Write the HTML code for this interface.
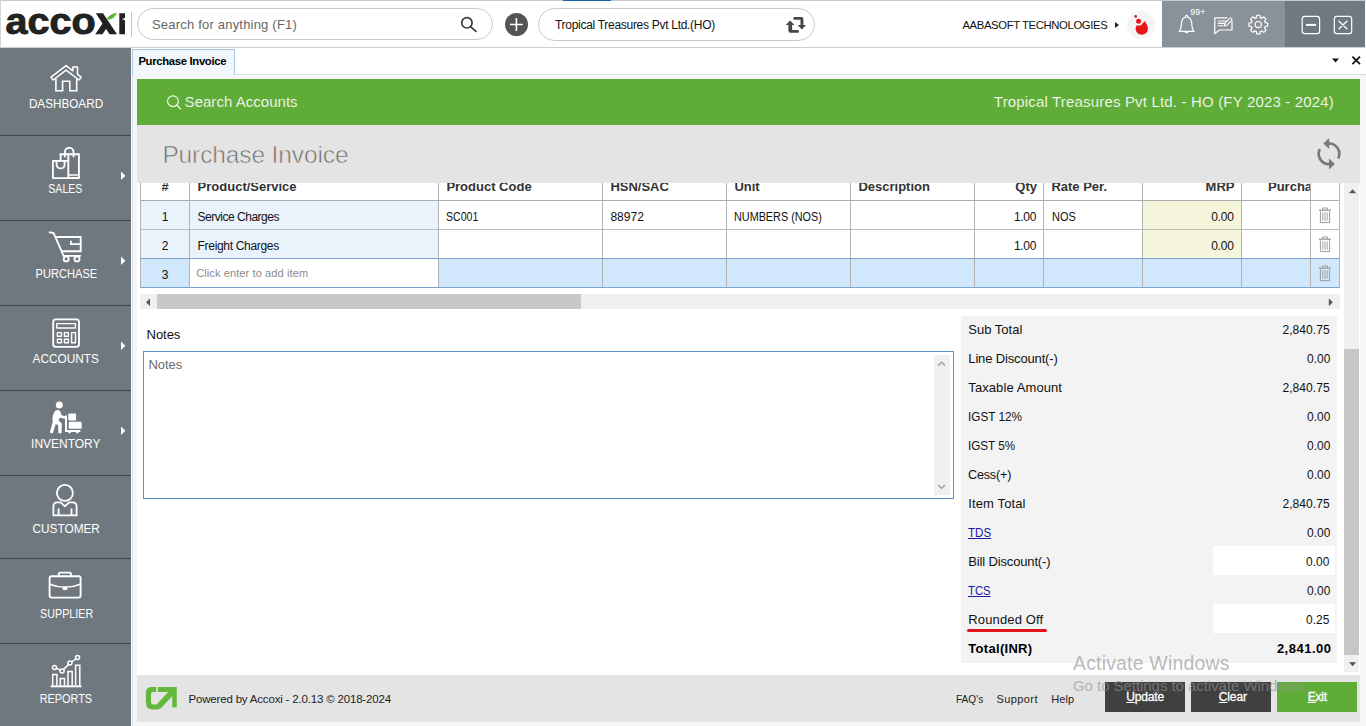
<!DOCTYPE html>
<html>
<head>
<meta charset="utf-8">
<title>Accoxi - Purchase Invoice</title>
<style>
*{box-sizing:border-box;margin:0;padding:0}
html,body{width:1366px;height:726px;overflow:hidden;background:#fff;font-family:"Liberation Sans",sans-serif;color:#111}
.abs{position:absolute}
.t{position:absolute;white-space:pre;line-height:1}
#app{position:relative;width:1366px;height:726px;overflow:hidden;background:#fff}

/* top bar */
#topline{left:0;top:0;width:1366px;height:1px;background:#c9c9c9}
#blueacc{left:563px;top:0;width:48px;height:1px;background:#1f62ad}
#leftline{left:0;top:0;width:1px;height:47px;background:#d5d5d5}
#barline{left:0;top:47px;width:1366px;height:1px;background:#cfcfcf}
#logosep{left:131px;top:12px;width:1px;height:25px;background:#c4c4c4}
.pill{border:1px solid #c9c9c9;border-radius:17px;background:#fff}
#search{left:137px;top:8px;width:356px;height:32px}
#company{left:538px;top:8px;width:277px;height:33px}
#plus{left:505px;top:13px;width:23px;height:23px;border-radius:50%;background:#555}
#ctrl1{left:1162px;top:1px;width:123px;height:46px;background:#8a9299}
#ctrl2{left:1285px;top:1px;width:80px;height:46px;background:#707981}
#avatar{left:1126.8px;top:10.9px;width:28.4px;height:28.4px;border-radius:50%;background:#f4f4f4}

/* sidebar */
#side{left:0;top:48px;width:131px;height:678px;background:#70787f}
.sitem{position:absolute;left:0;width:131px;height:85px;border-bottom:1px solid #4f575e}
.slabel{position:absolute;left:0;width:131px;text-align:center;color:#fff;font-size:12px;letter-spacing:-0.2px;line-height:1;white-space:pre}
.sarrow{position:absolute;left:120px;width:0;height:0;border-left:5px solid #fff;border-top:4px solid transparent;border-bottom:4px solid transparent}

/* main */
#mainborder{left:132px;top:75px;width:1px;height:651px;background:#dfe5ec}
#tab{left:132px;top:49px;width:103px;height:26px;background:#f2f7fc;border:1px solid #a9c4e0;border-bottom:none}
#tabline{left:235px;top:74px;width:1131px;height:1px;background:#dcdcdc}
#green{left:137px;top:79px;width:1223px;height:46px;background:#5fad38}
#title{left:137px;top:125px;width:1223px;height:58px;background:#e4e4e4}

.th{font-size:13px;font-weight:700;color:#333}
.td{font-size:12px;color:#111;letter-spacing:-0.3px}
</style>
</head>
<body>
<div id="app">

<!-- ======= TOP BAR ======= -->
<div class="abs" id="topline"></div>
<div class="abs" id="blueacc"></div>
<div class="abs" id="leftline"></div>
<div class="abs" id="barline"></div>
<svg class="abs" style="left:0;top:0" width="131" height="47" viewBox="0 0 131 47">
<text x="5.6" y="34.1" font-family="Liberation Sans" font-weight="700" font-size="36.4" textLength="90" lengthAdjust="spacingAndGlyphs" fill="#222" stroke="#222" stroke-width="0.9">acco</text>
<path d="M95.8 13.2 H103 L117 34.3 H109.6 Z" fill="#222"/>
<path d="M95.2 34.3 L103.4 22.2 L107 27.6 L102.4 34.3 Z" fill="#222"/>
<path d="M106.6 19.8 C108 15.8 112 13.4 116.7 13.1 C115.2 17.6 111.4 20.2 106.6 19.8 Z" fill="#62b83a"/>
<path d="M119.3 13.2 H125 V17.9 L121.8 19.1 L125 20.3 V34.3 H119.3 Z" fill="#222"/>
</svg>
<div class="abs" id="logosep"></div>
<div class="abs pill" id="search"></div>
<div class="t" style="left:152px;top:18px;font-size:13px;letter-spacing:0.2px;color:#666">Search for anything (F1)</div>
<svg class="abs" style="left:458px;top:14px" width="22" height="22" viewBox="0 0 22 22" fill="none" stroke="#3a3a3a" stroke-width="1.7"><circle cx="8.9" cy="8.8" r="5.2"/><path d="M12.8 12.8 L18 17.4" stroke-linecap="round"/></svg>
<div class="abs" id="plus"></div>
<svg class="abs" style="left:505px;top:13px" width="23" height="23" viewBox="0 0 23 23" fill="none" stroke="#fff" stroke-width="1.6"><path d="M11.4 5 V18 M4.9 11.5 H17.9"/></svg>
<div class="abs pill" id="company"></div>
<div class="t" style="left:555px;top:19px;font-size:12px;letter-spacing:-0.29px;color:#111">Tropical Treasures Pvt Ltd.(HO)</div>
<svg class="abs" style="left:784px;top:14px" width="24" height="22" viewBox="784 14 24 22" fill="#474747">
<path d="M790.1 20.6 L794.4 25 H792.1 V29.9 H798 Q798.9 29.9 798.9 30.9 V31.7 Q798.9 32.7 798 32.7 H790.4 Q788.4 32.7 788.4 30.7 V25 H785.8 Z"/>
<path d="M801.9 29.5 L797.7 25.1 H800.5 V19.8 H794.4 Q793.4 19.8 793.4 18.8 V18 Q793.4 17 794.4 17 H801.4 Q803.4 17 803.4 19 V25.1 H806 Z"/>
</svg>
<div class="t" style="left:962.4px;top:19.8px;font-size:11.3px;letter-spacing:-0.37px;color:#111">AABASOFT TECHNOLOGIES</div>
<div class="abs" style="left:1115px;top:21.8px;width:0;height:0;border-left:4.2px solid #222;border-top:3.3px solid transparent;border-bottom:3.3px solid transparent"></div>
<div class="abs" id="avatar"></div>
<svg class="abs" style="left:1127px;top:10px" width="29" height="29" viewBox="1127 10 29 29">
<circle cx="1141.8" cy="28.6" r="6.2" fill="#e8141a"/>
<path d="M1143 23.6 L1144.7 21 Q1146.2 23 1147 25.6 Z" fill="#e8141a"/>
<circle cx="1138.6" cy="21" r="4.7" fill="#f3f3f3"/>
<circle cx="1138.6" cy="21.2" r="2.5" fill="#e3151b"/>
<circle cx="1135.7" cy="16.4" r="1.3" fill="#c41a24"/>
</svg>
<div class="abs" id="ctrl1"></div>
<div class="abs" id="ctrl2"></div>
<svg class="abs" style="left:1162px;top:1px" width="204" height="46" viewBox="1162 1 204 46" fill="none" stroke="#fff" stroke-width="1.2" stroke-linejoin="round" stroke-linecap="round">
<path d="M1179 31.4 H1194.2 C1191.4 29.4 1192.2 25.4 1191.6 22.2 C1191 19.2 1189.2 17.6 1187.6 17.2 V16.4 A1 1 0 0 0 1185.6 16.4 V17.2 C1184 17.6 1182.2 19.2 1181.6 22.2 C1181 25.4 1181.8 29.4 1179 31.4 Z"/>
<path d="M1185.2 31.8 A1.5 1.5 0 0 0 1188 31.8"/>
<text x="1190.2" y="15.2" font-family="Liberation Sans" font-size="9" fill="#fff" stroke="none" textLength="15.2" lengthAdjust="spacingAndGlyphs">99+</text>
<path d="M1214.8 17.8 H1227 M1232 21.6 V30 H1219.6 L1214.8 33.6 V17.8" />
<path d="M1218.2 21 H1226 M1218.2 23.4 H1224.4 M1218.2 25.8 H1222.6" stroke-width="1.1"/>
<path d="M1224.2 26 L1225 23.2 L1229.8 18.4 Q1230.6 17.6 1231.6 18.6 Q1232.6 19.6 1231.8 20.4 L1227 25.2 Z" stroke-width="1.1"/>
<path d="M1256.38 17.66 L1256.69 15.24 L1259.91 15.24 L1260.22 17.66 L1261.85 18.34 L1263.78 16.84 L1266.06 19.12 L1264.56 21.05 L1265.24 22.68 L1267.66 22.99 L1267.66 26.21 L1265.24 26.52 L1264.56 28.15 L1266.06 30.08 L1263.78 32.36 L1261.85 30.86 L1260.22 31.54 L1259.91 33.96 L1256.69 33.96 L1256.38 31.54 L1254.75 30.86 L1252.82 32.36 L1250.54 30.08 L1252.04 28.15 L1251.36 26.52 L1248.94 26.21 L1248.94 22.99 L1251.36 22.68 L1252.04 21.05 L1250.54 19.12 L1252.82 16.84 L1254.75 18.34 Z" stroke-width="1.2"/>
<circle cx="1258.3" cy="24.6" r="3.1"/>
<rect x="1302.2" y="16.4" width="17.4" height="17.2" rx="2.6"/>
<path d="M1306 24.9 H1316" stroke-width="2" stroke-linecap="butt"/>
<rect x="1334.3" y="16.4" width="17.4" height="17.2" rx="2.6"/>
<path d="M1339 21.2 L1346.9 28.8 M1346.9 21.2 L1339 28.8" stroke-width="1.3"/>
</svg>

<!-- ======= SIDEBAR ======= -->
<div class="abs" id="side">
<div class="abs" style="left:0;top:87px;width:131px;height:1px;background:#3f474f"></div>
<div class="abs" style="left:0;top:172px;width:131px;height:1px;background:#3f474f"></div>
<div class="abs" style="left:0;top:257px;width:131px;height:1px;background:#3f474f"></div>
<div class="abs" style="left:0;top:342px;width:131px;height:1px;background:#3f474f"></div>
<div class="abs" style="left:0;top:427px;width:131px;height:1px;background:#3f474f"></div>
<div class="abs" style="left:0;top:510px;width:131px;height:1px;background:#3f474f"></div>
<div class="abs" style="left:0;top:595px;width:131px;height:1px;background:#3f474f"></div>
<div class="slabel" style="top:50px;left:27.79px;width:76.02px;letter-spacing:0;transform:scaleX(0.9761)">DASHBOARD</div>
<div class="slabel" style="top:135px;left:46.10px;width:38.70px;letter-spacing:0;transform:scaleX(0.8811)">SALES</div>
<div class="slabel" style="top:220px;left:33.11px;width:66.69px;letter-spacing:0;transform:scaleX(0.9252)">PURCHASE</div>
<div class="slabel" style="top:305px;left:31.78px;width:67.34px;letter-spacing:0;transform:scaleX(0.9846)">ACCOUNTS</div>
<div class="slabel" style="top:390px;left:30.51px;width:69.58px;letter-spacing:0;transform:scaleX(0.9974)">INVENTORY</div>
<div class="slabel" style="top:475px;left:31.93px;width:68.45px;letter-spacing:0;transform:scaleX(0.9832)">CUSTOMER</div>
<div class="slabel" style="top:560px;left:36.52px;width:59.36px;letter-spacing:0;transform:scaleX(0.8962)">SUPPLIER</div>
<div class="slabel" style="top:645px;left:37.15px;width:57.80px;letter-spacing:0;transform:scaleX(0.9083)">REPORTS</div>
<svg class="abs" style="left:0;top:-48px" width="131" height="726" viewBox="0 0 131 726" fill="none" stroke="#fff" stroke-width="1.85" stroke-linejoin="round" stroke-linecap="round">
<path d="M121 171.5 L125.4 175.7 L121 179.89999999999998 Z" fill="#fff" stroke="none"/>
<path d="M121 256.5 L125.4 260.7 L121 264.9 Z" fill="#fff" stroke="none"/>
<path d="M121 341.5 L125.4 345.7 L121 349.9 Z" fill="#fff" stroke="none"/>
<path d="M121 426.5 L125.4 430.7 L121 434.9 Z" fill="#fff" stroke="none"/>
<path d="M51 77.2 L66.1 65.6 L72.9 70.8 V67 H77.5 V74.4 L81.2 77.2 L79 80 L66.1 70.2 L53.2 80 Z" stroke-width="1.5"/>
<path d="M55.9 78.6 V90.8 H62.6 V81.2 H69.8 V90.8 H76.7 V78.6" stroke-width="1.6" stroke-linejoin="miter" stroke-linecap="butt"/>
<path d="M68.3 160.6 V154.2 H78.9 V178 H68.3" stroke-linejoin="miter"/>
<path d="M60.6 160.6 V154.2 H68.3"  stroke-linejoin="miter"/>
<path d="M64.9 156.6 V152 A4.3 4.3 0 0 1 73.5 152 V156.6"/>
<rect x="52.9" y="160.8" width="15.4" height="17.3"/>
<path d="M56.6 161 V164.4 A4 4 0 0 0 64.6 164.4 V161"/>
<path d="M68.6 174.9 H78.6" stroke-width="1.5"/>
<path d="M49.6 232.3 L53.6 233 L63.6 255.8 H80.2" />
<path d="M56.6 237 H80.7 V251.2 H62" stroke-linejoin="miter"/>
<path d="M70.9 241.4 V244.2 H80.5" stroke-linejoin="miter" stroke-width="1.8"/>
<circle cx="66.2" cy="258.9" r="2.5" stroke-width="1.9"/><circle cx="77" cy="258.9" r="2.5" stroke-width="1.9"/>
<rect x="53.2" y="319.3" width="25.8" height="27.6" rx="2.6"/>
<rect x="56.8" y="323.6" width="18.6" height="4.4" stroke-width="1.4"/>
<rect x="57.4" y="332.6" width="4" height="3.6" stroke-width="1.4"/>
<rect x="64.4" y="332.6" width="4" height="3.6" stroke-width="1.4"/>
<rect x="57.4" y="339.2" width="4" height="3.6" stroke-width="1.4"/>
<rect x="64.4" y="339.2" width="4" height="3.6" stroke-width="1.4"/>
<rect x="71.6" y="332.6" width="3.9" height="10.2" stroke-width="1.4"/>
<g fill="#fff" stroke="none">
<circle cx="59.3" cy="405" r="3.5"/>
<path d="M55.4 410.6 C57 409.6 59.6 410 60.4 411.6 L61.6 415.2 L65.4 416.2 L65 418.8 L59.6 417.8 L58.6 420.6 L61.8 423.4 L61.6 433.2 L58.4 433.2 L58.2 425.6 L55.8 423.8 L52.8 433.6 L49.8 432.6 L52.6 422.4 C52 418 53 413.4 55.4 410.6 Z"/>
<path d="M65 415.4 H67 V430 H80.4 V432 H78.6 A1.4 1.4 0 0 1 75.8 432 H71 A1.4 1.4 0 0 1 68.2 432 H65 Z"/>
<rect x="68.3" y="413.4" width="7.8" height="7" rx="1.2"/>
<rect x="68.7" y="421.8" width="13" height="7" rx="1.2"/>
</g>
<circle cx="64.9" cy="492.9" r="8" stroke-width="1.8"/>
<path d="M53.4 515.3 V506.6 Q53.4 502.4 57.6 502.4 H60.6 L64.9 506.2 L69.2 502.4 H72.4 Q76.6 502.4 76.6 506.6 V515.3 Z" stroke-linejoin="miter" stroke-width="1.8"/>
<path d="M58.6 508.6 V515 M71.5 508.6 V515" stroke-linecap="butt"/>
<rect x="49.6" y="576.2" width="31" height="21.4" rx="2" stroke-width="1.9"/>
<path d="M58.8 576 V574 Q58.8 572.6 60.2 572.6 H69.6 Q71 572.6 71 574 V576"/>
<path d="M49.8 584.2 Q65 590.4 80.4 584.2" stroke-width="1.5"/>
<path d="M63.2 587.4 V589.6 H66.8 V587.4 Z" stroke-width="1" fill="#fff"/>
<path d="M50.6 686.3 H81.4" stroke-width="2" stroke-linecap="butt"/>
<path d="M52.7 685.4 V674.4 H56.9 V685.4" stroke-width="1.5" stroke-linejoin="miter" stroke-linecap="butt"/>
<path d="M60.3 685.4 V678.6 H64.5 V685.4" stroke-width="1.5" stroke-linejoin="miter" stroke-linecap="butt"/>
<path d="M68 685.4 V671.4 H72.2 V685.4" stroke-width="1.5" stroke-linejoin="miter" stroke-linecap="butt"/>
<path d="M75.6 685.4 V665.2 H79.8 V685.4" stroke-width="1.5" stroke-linejoin="miter" stroke-linecap="butt"/>
<path d="M56.4 668.3 L60.2 670.1 M63.6 669.4 L68.4 664.6 M71.9 661.9 L75.6 659" stroke-width="1.5"/>
<circle cx="54.5" cy="667.4" r="2" stroke-width="1.5"/>
<circle cx="62.1" cy="671" r="2" stroke-width="1.5"/>
<circle cx="69.9" cy="663" r="2" stroke-width="1.5"/>
<circle cx="77.6" cy="657.6" r="2" stroke-width="1.5"/>
</svg>
</div>

<!-- ======= MAIN ======= -->
<div class="abs" style="left:132px;top:75px;width:1234px;height:651px;background:#f5f6f8"></div>
<div class="abs" style="left:137px;top:183px;width:1223px;height:492px;background:#fff"></div>
<div class="abs" id="mainborder"></div>
<div class="abs" id="tabline"></div>
<div class="abs" id="tab"></div>
<div class="t" style="left:138.4px;top:55.95px;font-size:11.3px;font-weight:700;letter-spacing:-0.32px;color:#000">Purchase Invoice</div>
<svg class="abs" style="left:1328px;top:53px" width="36" height="16" viewBox="0 0 36 16"><path d="M4 5.4 H11 L7.5 9.4 Z" fill="#111"/><path d="M24.4 3.6 L32 11.2 M32 3.6 L24.4 11.2" stroke="#111" stroke-width="1.7" fill="none"/></svg>
<div class="abs" id="green"></div>
<svg class="abs" style="left:165px;top:93px" width="18" height="18" viewBox="0 0 18 18" fill="none" stroke="#f0f9ea" stroke-width="1.15"><circle cx="8" cy="8.2" r="5.4"/><path d="M11.9 12 L15.6 16" stroke-linecap="round"/></svg>
<div class="t" style="left:184.6px;top:93.90px;font-size:15px;color:#fff;letter-spacing:0.03px;font-weight:400;-webkit-text-stroke:0.2px #5fad38;">Search Accounts</div>
<div class="t" style="right:32px;top:93.90px;font-size:15px;color:#fff;letter-spacing:0.17px;font-weight:400;-webkit-text-stroke:0.2px #5fad38;">Tropical Treasures Pvt Ltd. - HO (FY 2023 - 2024)</div>
<div class="abs" id="title"></div>
<div class="t" style="left:162.4px;top:142.76px;font-size:24.5px;color:#6c6c6c;-webkit-text-stroke:0.65px #e4e4e4;letter-spacing:-0.12px;font-weight:400;">Purchase Invoice</div>
<svg class="abs" style="left:1313px;top:136px" width="34" height="36" viewBox="1313 136 34 36" fill="none" stroke="#787878" stroke-width="2.7">
<path d="M1329.00 143.50 A10.3 10.3 0 0 1 1338.18 158.48"/>
<path d="M1329.00 164.10 A10.3 10.3 0 0 1 1319.82 149.12"/>
<path d="M1323.3 143.5 L1329.2 138 V149 Z" fill="#787878" stroke="none"/>
<path d="M1334.9 164.1 L1329 158.6 V169.6 Z" fill="#787878" stroke="none"/>
</svg>

<div class="abs" id="tbl" style="left:0;top:183px;width:1366px;height:110px;overflow:hidden">
<div class="abs" style="left:0;top:-183px;width:1366px;height:726px">
<div class="abs" style="left:141px;top:201px;width:297px;height:57px;background:#eaf3fc"></div>
<div class="abs" style="left:1143px;top:201px;width:98px;height:57px;background:#f5f5dc"></div>
<div class="abs" style="left:141px;top:259px;width:1198px;height:28px;background:#d1e7fc"></div>
<div class="abs" style="left:190px;top:259px;width:248px;height:28px;background:#ffffff"></div>
<div class="abs" style="left:140px;top:200px;width:1200px;height:1px;background:#ababab"></div>
<div class="abs" style="left:140px;top:229px;width:1200px;height:1px;background:#bcbcbc"></div>
<div class="abs" style="left:140px;top:170px;width:1px;height:118px;background:#b2b2b2"></div>
<div class="abs" style="left:189px;top:170px;width:1px;height:118px;background:#b2b2b2"></div>
<div class="abs" style="left:438px;top:170px;width:1px;height:118px;background:#b2b2b2"></div>
<div class="abs" style="left:602px;top:170px;width:1px;height:118px;background:#b2b2b2"></div>
<div class="abs" style="left:726px;top:170px;width:1px;height:118px;background:#b2b2b2"></div>
<div class="abs" style="left:850px;top:170px;width:1px;height:118px;background:#b2b2b2"></div>
<div class="abs" style="left:974px;top:170px;width:1px;height:118px;background:#b2b2b2"></div>
<div class="abs" style="left:1043px;top:170px;width:1px;height:118px;background:#b2b2b2"></div>
<div class="abs" style="left:1142px;top:170px;width:1px;height:118px;background:#b2b2b2"></div>
<div class="abs" style="left:1241px;top:170px;width:1px;height:118px;background:#b2b2b2"></div>
<div class="abs" style="left:1310px;top:170px;width:1px;height:118px;background:#b2b2b2"></div>
<div class="abs" style="left:1339px;top:170px;width:1px;height:118px;background:#b2b2b2"></div>
<div class="abs" style="left:140px;top:258px;width:1200px;height:1px;background:#7ba3cc"></div>
<div class="abs" style="left:140px;top:287px;width:1200px;height:1px;background:#7ba3cc"></div>
<div class="t" style="left:141px;width:48px;text-align:center;top:179.90px;font-size:13px;color:#333;letter-spacing:0px;font-weight:700;">#</div>
<div class="t" style="left:197.6px;top:179.90px;font-size:13px;color:#333;letter-spacing:0px;font-weight:700;">Product/Service</div>
<div class="t" style="left:446.4px;top:179.90px;font-size:13px;color:#333;letter-spacing:0px;font-weight:700;">Product Code</div>
<div class="t" style="left:610.4px;top:179.90px;font-size:13px;color:#333;letter-spacing:0px;font-weight:700;">HSN/SAC</div>
<div class="t" style="left:734.4px;top:179.90px;font-size:13px;color:#333;letter-spacing:0px;font-weight:700;">Unit</div>
<div class="t" style="left:858.4px;top:179.90px;font-size:13px;color:#333;letter-spacing:0px;font-weight:700;">Description</div>
<div class="t" style="right:329px;top:179.90px;font-size:13px;color:#333;letter-spacing:0px;font-weight:700;">Qty</div>
<div class="t" style="left:1051.4px;top:179.90px;font-size:13px;color:#333;letter-spacing:0px;font-weight:700;">Rate Per.</div>
<div class="t" style="right:131.5px;top:179.90px;font-size:13px;color:#333;letter-spacing:0px;font-weight:700;">MRP</div>
<div class="abs" style="left:1242px;top:170px;width:68px;height:30px;overflow:hidden"><div class="t" style="left:26px;top:9.90px;font-size:13px;font-weight:700;color:#333">Purchase Rate</div></div>
<div class="t" style="left:141px;width:48px;text-align:center;top:210.64px;font-size:12px;color:#111;letter-spacing:0px;font-weight:400;">1</div>
<div class="t" style="left:197.4px;top:210.64px;font-size:12px;color:#111;letter-spacing:-0.47px;font-weight:400;">Service Charges</div>
<div class="t" style="left:446.4px;top:210.64px;font-size:12px;color:#111;letter-spacing:0px;font-weight:400;transform:scaleX(0.88);transform-origin:left center;">SC001</div>
<div class="t" style="left:610.4px;top:210.64px;font-size:12px;color:#111;letter-spacing:0.04px;font-weight:400;">88972</div>
<div class="t" style="left:734.4px;top:210.64px;font-size:12px;color:#111;letter-spacing:0px;font-weight:400;transform:scaleX(0.902);transform-origin:left center;">NUMBERS (NOS)</div>
<div class="t" style="right:330.03999999999996px;top:210.64px;font-size:12px;color:#111;letter-spacing:-0.34px;font-weight:400;">1.00</div>
<div class="t" style="left:1051.5px;top:210.64px;font-size:12px;color:#111;letter-spacing:0px;font-weight:400;transform:scaleX(0.911);transform-origin:left center;">NOS</div>
<div class="t" style="right:132.29999999999995px;top:210.64px;font-size:12px;color:#111;letter-spacing:-0.2px;font-weight:400;">0.00</div>
<div class="t" style="left:141px;width:48px;text-align:center;top:239.64px;font-size:12px;color:#111;letter-spacing:0px;font-weight:400;">2</div>
<div class="t" style="left:197.6px;top:239.64px;font-size:12px;color:#111;letter-spacing:-0.32px;font-weight:400;">Freight Charges</div>
<div class="t" style="right:330.03999999999996px;top:239.64px;font-size:12px;color:#111;letter-spacing:-0.34px;font-weight:400;">1.00</div>
<div class="t" style="right:132.29999999999995px;top:239.64px;font-size:12px;color:#111;letter-spacing:-0.2px;font-weight:400;">0.00</div>
<div class="t" style="left:141px;width:48px;text-align:center;top:268.54px;font-size:12px;color:#111;letter-spacing:0px;font-weight:400;">3</div>
<div class="t" style="left:196.2px;top:267.59px;font-size:11px;color:#8a8a8a;letter-spacing:0.11px;font-weight:400;">Click enter to add item</div>
<svg class="abs" style="left:1318px;top:207.0px" width="14" height="17" viewBox="0 0 14 17" fill="none" stroke="#9c9c9c" stroke-width="1"><path d="M4.6 3 V1 H9.4 V3"/><path d="M1 3.2 H13" stroke-width="1.3"/><path d="M2.4 4.4 V15.6 H11.6 V4.4"/><path d="M4.8 5.4 V13.8 M7 5.4 V13.8 M9.2 5.4 V13.8" stroke-width="0.9"/></svg>
<svg class="abs" style="left:1318px;top:236.0px" width="14" height="17" viewBox="0 0 14 17" fill="none" stroke="#9c9c9c" stroke-width="1"><path d="M4.6 3 V1 H9.4 V3"/><path d="M1 3.2 H13" stroke-width="1.3"/><path d="M2.4 4.4 V15.6 H11.6 V4.4"/><path d="M4.8 5.4 V13.8 M7 5.4 V13.8 M9.2 5.4 V13.8" stroke-width="0.9"/></svg>
<svg class="abs" style="left:1318px;top:265.0px" width="14" height="17" viewBox="0 0 14 17" fill="none" stroke="#9c9c9c" stroke-width="1"><path d="M4.6 3 V1 H9.4 V3"/><path d="M1 3.2 H13" stroke-width="1.3"/><path d="M2.4 4.4 V15.6 H11.6 V4.4"/><path d="M4.8 5.4 V13.8 M7 5.4 V13.8 M9.2 5.4 V13.8" stroke-width="0.9"/></svg>
</div></div>
<div class="abs" style="left:140px;top:294px;width:1200px;height:15px;background:#f0f0f0;"></div>
<div class="abs" style="left:157px;top:294px;width:424px;height:15px;background:#c8c8c8;"></div>
<svg class="abs" style="left:140px;top:294px" width="1200" height="15" viewBox="0 0 1200 15"><path d="M10 4.5 L6 8.3 L10 12.1 Z" fill="#555"/><path d="M1188.8 4.5 L1192.9 8.3 L1188.8 12.1 Z" fill="#555"/></svg>

<div class="t" style="left:146.6px;top:327.90px;font-size:13px;color:#111;letter-spacing:-0.05px;font-weight:400;">Notes</div>
<div class="abs" style="left:143px;top:351px;width:811px;height:148px;border:1px solid #5b93c9;background:#fff"></div>
<div class="t" style="left:148.4px;top:357.90px;font-size:13px;color:#6b6b6b;letter-spacing:-0.05px;font-weight:400;">Notes</div>
<div class="abs" style="left:934px;top:355px;width:16px;height:140px;background:#f0f0f0;"></div>
<svg class="abs" style="left:934px;top:355px" width="16" height="139" viewBox="0 0 16 139" fill="none" stroke="#a8a8a8" stroke-width="1.6"><path d="M4.2 10.6 L7.6 7.2 L11 10.6"/><path d="M4.2 130 L7.6 133.4 L11 130"/></svg>

<!--TOT:BEGIN-->
<div class="abs" style="left:961px;top:316px;width:376px;height:347px;background:#f3f3f3;"></div>
<div class="abs" style="left:1213px;top:546px;width:122px;height:29px;background:#fff;"></div>
<div class="abs" style="left:1213px;top:604px;width:122px;height:29px;background:#fff;"></div>
<div class="t" style="left:968.3px;top:322.60px;font-size:13px;color:#111;letter-spacing:0px;font-weight:400;">Sub Total</div>
<div class="t" style="right:36.30px;top:322.60px;font-size:13px;color:#111;letter-spacing:0px;font-weight:400;transform:scaleX(0.9306461173681091);transform-origin:right center;">2,840.75</div>
<div class="t" style="left:968.3px;top:351.60px;font-size:13px;color:#111;letter-spacing:-0.15px;font-weight:400;">Line Discount(-)</div>
<div class="t" style="right:35.50px;top:351.60px;font-size:13px;color:#111;letter-spacing:0px;font-weight:400;transform:scaleX(0.916633741604109);transform-origin:right center;">0.00</div>
<div class="t" style="left:968.3px;top:380.60px;font-size:13px;color:#111;letter-spacing:0.09px;font-weight:400;">Taxable Amount</div>
<div class="t" style="right:36.30px;top:380.60px;font-size:13px;color:#111;letter-spacing:0px;font-weight:400;transform:scaleX(0.9306461173681091);transform-origin:right center;">2,840.75</div>
<div class="t" style="left:968.3px;top:409.60px;font-size:13px;color:#111;letter-spacing:0px;font-weight:400;transform:scaleX(0.902);transform-origin:left center;">IGST 12%</div>
<div class="t" style="right:35.50px;top:409.60px;font-size:13px;color:#111;letter-spacing:0px;font-weight:400;transform:scaleX(0.916633741604109);transform-origin:right center;">0.00</div>
<div class="t" style="left:968.3px;top:438.60px;font-size:13px;color:#111;letter-spacing:0px;font-weight:400;transform:scaleX(0.897);transform-origin:left center;">IGST 5%</div>
<div class="t" style="right:35.50px;top:438.60px;font-size:13px;color:#111;letter-spacing:0px;font-weight:400;transform:scaleX(0.916633741604109);transform-origin:right center;">0.00</div>
<div class="t" style="left:968.3px;top:467.60px;font-size:13px;color:#111;letter-spacing:-0.2px;font-weight:400;transform:scaleX(0.97);transform-origin:left center;">Cess(+)</div>
<div class="t" style="right:35.50px;top:467.60px;font-size:13px;color:#111;letter-spacing:0px;font-weight:400;transform:scaleX(0.916633741604109);transform-origin:right center;">0.00</div>
<div class="t" style="left:968.3px;top:496.60px;font-size:13px;color:#111;letter-spacing:0.12px;font-weight:400;">Item Total</div>
<div class="t" style="right:36.30px;top:496.60px;font-size:13px;color:#111;letter-spacing:0px;font-weight:400;transform:scaleX(0.9306461173681091);transform-origin:right center;">2,840.75</div>
<div class="t" style="left:968.3px;top:525.60px;font-size:13px;color:#1a1aa6;letter-spacing:0px;font-weight:400;transform:scaleX(0.892);transform-origin:left center;text-decoration:underline;text-underline-offset:1px">TDS</div>
<div class="t" style="right:35.50px;top:525.60px;font-size:13px;color:#111;letter-spacing:0px;font-weight:400;transform:scaleX(0.916633741604109);transform-origin:right center;">0.00</div>
<div class="t" style="left:968.3px;top:554.60px;font-size:13px;color:#111;letter-spacing:-0.15px;font-weight:400;">Bill Discount(-)</div>
<div class="t" style="right:36.40px;top:554.60px;font-size:13px;color:#111;letter-spacing:0px;font-weight:400;transform:scaleX(0.916633741604109);transform-origin:right center;">0.00</div>
<div class="t" style="left:968.3px;top:583.60px;font-size:13px;color:#1a1aa6;letter-spacing:0px;font-weight:400;transform:scaleX(0.866);transform-origin:left center;text-decoration:underline;text-underline-offset:1px">TCS</div>
<div class="t" style="right:35.50px;top:583.60px;font-size:13px;color:#111;letter-spacing:0px;font-weight:400;transform:scaleX(0.916633741604109);transform-origin:right center;">0.00</div>
<div class="t" style="left:968.3px;top:612.60px;font-size:13px;color:#111;letter-spacing:0.14px;font-weight:400;">Rounded Off</div>
<div class="t" style="right:36.40px;top:612.60px;font-size:13px;color:#111;letter-spacing:0px;font-weight:400;transform:scaleX(0.916633741604109);transform-origin:right center;">0.25</div>
<div class="t" style="left:968.3px;top:641.60px;font-size:13px;color:#000;letter-spacing:0.3px;font-weight:700;">Total(INR)</div>
<div class="t" style="right:34.50px;top:641.60px;font-size:13px;color:#000;letter-spacing:0.5px;font-weight:700;">2,841.00</div>
<div class="abs" style="left:967px;top:629.4px;width:80px;height:2.8px;border-radius:2px;background:#e3141c"></div>
<!--TOT:END-->
<div class="abs" style="left:1344px;top:183px;width:15px;height:489px;background:#f0f0f0;"></div>
<div class="abs" style="left:1344px;top:349px;width:15px;height:306px;background:#c6c6c6;"></div>
<svg class="abs" style="left:1344px;top:183px" width="15" height="489" viewBox="0 0 15 489"><path d="M5 10.2 L8.6 6.2 L12.2 10.2 Z" fill="#555"/><path d="M5 479.2 L8.6 483.2 L12.2 479.2 Z" fill="#555"/></svg>


<div class="abs" style="left:137px;top:675px;width:1223px;height:47px;background:#e4e4e4;"></div>
<svg class="abs" style="left:144px;top:685px" width="36" height="27" viewBox="144 685 36 27"><path d="M151.5 686.9 H156.2 V691.9 H153.4 Q151 691.9 151 694.3 V701.8 Q151 704.5 153.7 704.5 H156.6 L168.2 691.9 H157.8 V686.9 H176.8 V707.2 H172.2 V696.2 L161.6 707.6 Q159.8 709.6 157 709.6 H152.9 Q145.9 709.6 145.9 702.6 V692.5 Q145.9 686.9 151.5 686.9 Z" fill="#63b73d"/></svg>
<div class="t" style="left:188.5px;top:693.97px;font-size:11.5px;color:#222;letter-spacing:-0.18px;font-weight:400;">Powered by Accoxi - 2.0.13 © 2018-2024</div>
<div class="t" style="left:955.5px;top:693.59px;font-size:11px;color:#222;letter-spacing:0px;font-weight:400;transform:scaleX(0.92);transform-origin:left center;">FAQ&#39;s</div>
<div class="t" style="left:996.4px;top:693.59px;font-size:11px;color:#222;letter-spacing:0.42px;font-weight:400;">Support</div>
<div class="t" style="left:1051.3px;top:693.59px;font-size:11px;color:#222;letter-spacing:0.1px;font-weight:400;">Help</div>
<div class="abs" style="left:1105px;top:682px;width:80px;height:30px;background:#404040;"></div>
<div class="abs" style="left:1191px;top:682px;width:80px;height:30px;background:#404040;"></div>
<div class="abs" style="left:1277px;top:682px;width:80px;height:30px;background:#5fad38;"></div>
<div class="t" style="left:1126.3px;top:690.54px;font-size:12px;color:#fff;letter-spacing:-0.17px;font-weight:400;-webkit-text-stroke:0.3px #fff;"><span style="text-decoration:underline;text-underline-offset:1px">U</span>pdate</div>
<div class="t" style="left:1218.8px;top:690.54px;font-size:12px;color:#fff;letter-spacing:-0.14px;font-weight:400;-webkit-text-stroke:0.3px #fff;"><span style="text-decoration:underline;text-underline-offset:1px">C</span>lear</div>
<div class="t" style="left:1307.8px;top:690.54px;font-size:12px;color:#fff;letter-spacing:-0.25px;font-weight:400;-webkit-text-stroke:0.3px #fff;"><span style="text-decoration:underline;text-underline-offset:1px">E</span>xit</div>
<div class="t" style="left:1073px;top:653.89px;font-size:19.5px;color:rgba(147,147,147,0.65);letter-spacing:0.17px;font-weight:400;">Activate Windows</div>
<div class="t" style="left:1073px;top:677.90px;font-size:15px;color:rgba(147,147,147,0.65);letter-spacing:-0.05px;font-weight:400;">Go to Settings to activate Windows.</div>

</div>
</body>
</html>
